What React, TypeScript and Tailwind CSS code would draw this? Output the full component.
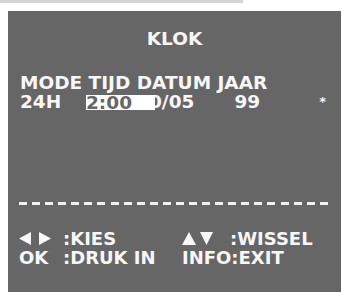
const font = { fontFamily: '"DejaVu Sans", "Liberation Sans", sans-serif' };

const Dashes = () => (
  <div className="flex justify-between w-[309px] ml-[11px]">
    {Array.from({ length: 24 }).map((_, i) => (
      <div key={i} className="w-[8px] h-[3px] bg-[#f0f0f0]" />
    ))}
  </div>
);

const Tri = ({ dir }: { dir: "l" | "r" | "u" | "d" }) => {
  const pts = {
    l: "12,0 12,13 0,6.5",
    r: "0,0 0,13 12,6.5",
    u: "0,13 14,13 7,0",
    d: "0,0 13,0 6.5,13",
  }[dir];
  const w = dir === "u" ? 14 : dir === "d" ? 13 : 12;
  return (
    <svg width={w} height={13} viewBox={`0 0 ${w} 13`} className="block">
      <polygon points={pts} fill="#f7f7f7" />
    </svg>
  );
};

export default function App() {
  return (
    <div
      className="w-[342px] h-[295px] bg-white overflow-hidden"
      style={font}
    >
      <div className="h-[3px] w-[243px] bg-[#d4d4d4]" />
      <div className="mt-[8px] ml-[8px] w-[333px] h-[281px] bg-[#666666] text-[#f7f7f7] font-bold text-[18.5px] leading-[18px] flex flex-col">
        <div className="text-center mt-[19px]">KLOK</div>

        <div className="mt-[26px] pl-[12px] whitespace-nowrap">
          MODE TIJD DATUM JAAR
        </div>
        <div className="mt-[1px] pl-[12px] flex items-center whitespace-nowrap">
          <span className="w-[66px]">24H</span>
          <span className="relative z-10 bg-white text-[#666666] w-[69px] h-[15px] leading-[15px]">
            2:00
          </span>
          <span className="ml-[-6px]">0/05</span>
          <span className="ml-[40px]">99</span>
          <span className="ml-[59px] text-[13px]">*</span>
        </div>

        <div className="mt-[91px]">
          <Dashes />
        </div>

        <div className="mt-[24px] pl-[11px] grid grid-cols-[163px_1fr] text-[18px] leading-[19px] whitespace-nowrap">
          <div className="flex items-center">
            <span className="w-[44px] flex gap-[8px]">
              <Tri dir="l" />
              <Tri dir="r" />
            </span>
            <span>:KIES</span>
          </div>
          <div className="flex items-center">
            <span className="w-[48px] flex gap-[4px]">
              <Tri dir="u" />
              <Tri dir="d" />
            </span>
            <span>:WISSEL</span>
          </div>
          <div className="flex items-center">
            <span className="w-[44px]">OK</span>
            <span>:DRUK IN</span>
          </div>
          <div>INFO:EXIT</div>
        </div>
      </div>
    </div>
  );
}
